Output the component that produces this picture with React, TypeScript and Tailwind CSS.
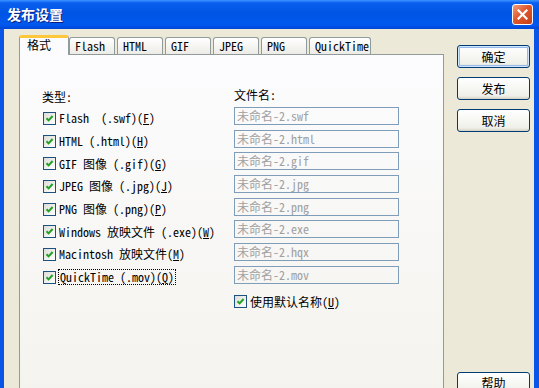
import React from 'react'

const mono = "font-['Noto_Sans_Mono_CJK_SC','Liberation_Mono','Noto_Sans_CJK_SC',monospace]"

type Row = {
  name: string
  ext: string
  key: string
  file: string
  focus?: boolean
}

const rows: Row[] = [
  { name: 'Flash  ', ext: '(.swf)', key: 'F', file: '未命名-2.swf' },
  { name: 'HTML ', ext: '(.html)', key: 'H', file: '未命名-2.html' },
  { name: 'GIF 图像 ', ext: '(.gif)', key: 'G', file: '未命名-2.gif' },
  { name: 'JPEG 图像 ', ext: '(.jpg)', key: 'J', file: '未命名-2.jpg' },
  { name: 'PNG 图像 ', ext: '(.png)', key: 'P', file: '未命名-2.png' },
  { name: 'Windows 放映文件 ', ext: '(.exe)', key: 'W', file: '未命名-2.exe' },
  { name: 'Macintosh 放映文件', ext: '', key: 'M', file: '未命名-2.hqx' },
  { name: 'QuickTime ', ext: '(.mov)', key: 'Q', file: '未命名-2.mov', focus: true }
]

function Check() {
  return (
    <span className="flex h-[13px] w-[13px] shrink-0 items-center justify-center border border-[#1C5180] bg-[linear-gradient(135deg,#DCDCD7,#FFFFFF)]">
      <svg width="9" height="9" viewBox="0 0 9 9">
        <path d="M1.5 4.2 L3.6 6.4 L7.6 2" fill="none" stroke="#21A121" strokeWidth="2" />
      </svg>
    </span>
  )
}

function XpButton({ label, isDefault }: { label: string; isDefault?: boolean }) {
  return (
    <button
      className={
        isDefault
          ? "h-[23px] w-[73px] rounded-[3px] border border-[#003C74] bg-[linear-gradient(to_bottom,#FFFFFF,#F0F0EA_85%,#D6D0C5)] text-[12px] text-black font-['Noto_Sans_CJK_SC',sans-serif] shadow-[inset_0_0_0_1px_#CEE7FF,inset_0_0_0_2px_#98B8EA]"
          : "h-[23px] w-[73px] rounded-[3px] border border-[#003C74] bg-[linear-gradient(to_bottom,#FFFFFF,#F0F0EA_85%,#D6D0C5)] text-[12px] text-black font-['Noto_Sans_CJK_SC',sans-serif]"
      }
    >
      {label}
    </button>
  )
}

const tabs = [
  { label: 'Flash', w: 'w-[46px] ml-0' },
  { label: 'HTML', w: 'w-[46px] ml-[2px]' },
  { label: 'GIF', w: 'w-[46px] ml-[2px]' },
  { label: 'JPEG', w: 'w-[46px] ml-[2px]' },
  { label: 'PNG', w: 'w-[46px] ml-[2px]' },
  { label: 'QuickTime', w: 'w-[62px] ml-[2px]' }
]

export default function App() {
  return (
    <div className="flex h-[388px] w-[539px] flex-col overflow-hidden bg-[#ECE9D8]">
      {/* title bar */}
      <div className="flex h-[29px] shrink-0 items-center justify-between bg-[linear-gradient(to_bottom,#3D95FF_0%,#0A5FEF_10%,#0055E5_45%,#0058EE_85%,#0046D6_100%)] pl-[7px] pr-[6px]">
        <span className="text-[14px] font-bold text-white font-['Noto_Sans_CJK_SC',sans-serif] [text-shadow:1px_1px_0_#0A1E80]">
          发布设置
        </span>
        <span className="flex h-[21px] w-[21px] items-center justify-center rounded-[3px] border border-white bg-[linear-gradient(135deg,#F0A080,#E0572E_45%,#C43E16)]">
          <svg width="11" height="11" viewBox="0 0 11 11">
            <path d="M1.5 1.5 L9.5 9.5 M9.5 1.5 L1.5 9.5" stroke="white" strokeWidth="2.2" strokeLinecap="square" />
          </svg>
        </span>
      </div>

      {/* body */}
      <div className="flex flex-1 border-l-[4px] border-r-[5px] border-[#0A55E5] pl-[15px]">
        <div className="flex w-[425px] flex-col pt-[6px]">
          <div className="relative z-10 flex h-[19px] items-end">
            <div className={`-mb-px h-[20px] w-[50px] rounded-t-[3px] border-x border-t-[3px] border-x-[#919B9C] border-t-[#FFC83C] bg-[#FCFCFE] pl-[7px] text-[12px] leading-[14px] text-black ${mono}`}>
              格式
            </div>
            {tabs.map((tab) => (
              <div
                key={tab.label}
                className={`${tab.w} h-[17px] rounded-t-[3px] border-x border-t border-[#919B9C] bg-[linear-gradient(to_bottom,#FFFFFF,#ECEBE6)] pl-[5px] pt-[1px] text-[12px] leading-[14px] text-black ${mono}`}
              >
                {tab.label}
              </div>
            ))}
          </div>
          <div className={`flex-1 border border-[#919B9C] bg-[linear-gradient(to_bottom,#FCFCFE,#F4F3EE)] pl-[22px] pt-[35px] text-[12px] text-black ${mono}`}>
            <div className="flex">
              <div className="flex w-[192px] flex-col">
                <div className="h-[14px] leading-[14px]">类型:</div>
                <div className="mt-[3px] flex flex-col">
                  {rows.map((row) => (
                    <div key={row.key} className="flex h-[22.7px] items-center pl-[1px]">
                      <Check />
                      <span
                        className={
                          row.focus
                            ? 'ml-[2px] whitespace-pre border border-dotted border-black px-[1px] leading-[14px]'
                            : 'ml-[3px] whitespace-pre leading-[14px]'
                        }
                      >
                        {row.name}
                        {row.ext}(<span className="underline">{row.key}</span>)
                      </span>
                    </div>
                  ))}
                </div>
              </div>
              <div className="-mt-[2px] flex flex-col">
                <div className="h-[14px] leading-[14px]">文件名:</div>
                <div className="mt-[5px] flex flex-col gap-[4.7px]">
                  {rows.map((row) => (
                    <div
                      key={row.file}
                      className="flex h-[18px] w-[165px] items-center border border-[#7F9DB9] pl-[2px] leading-[14px] text-[#A0A0A0]"
                    >
                      {row.file}
                    </div>
                  ))}
                </div>
                <div className="mt-[10px] flex h-[16px] items-center">
                  <Check />
                  <span className="ml-[3px] leading-[14px]">
                    使用默认名称(<span className="underline">U</span>)
                  </span>
                </div>
              </div>
            </div>
          </div>
        </div>

        <div className="ml-[13px] flex flex-col pt-[16px]">
          <div className="flex flex-col gap-[9px]">
            <XpButton label="确定" isDefault />
            <XpButton label="发布" />
            <XpButton label="取消" />
          </div>
          <div className="mt-[238px]">
            <XpButton label="帮助" />
          </div>
        </div>
      </div>
    </div>
  )
}
